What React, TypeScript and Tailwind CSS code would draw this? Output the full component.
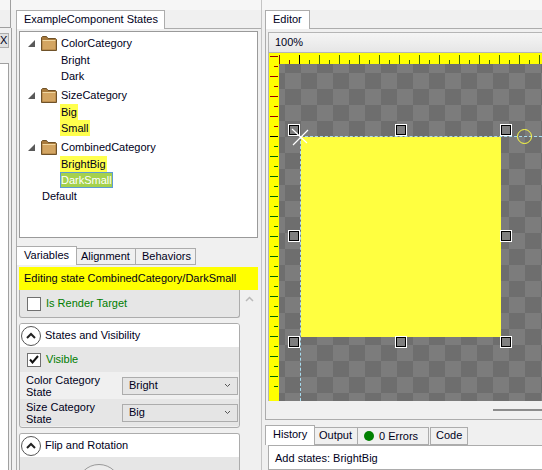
import React from "react";

const font = "font-['Liberation_Sans',Arial,sans-serif]";

function FolderIcon() {
  return (
    <svg width="16" height="15" viewBox="0 0 16 15" className="shrink-0">
      <path d="M0.5 14.5V1.5L1.5 0.5H5.5L7 2.5H14.5L15.5 3.5V14.5Z" fill="#a87a3c" stroke="#6f5229" />
      <path d="M1.5 5H14.5V13.5H1.5Z" fill="#d3a562" />
      <path d="M1.5 4.5H14.5" stroke="#f0d6a0" />
    </svg>
  );
}

function Expander() {
  return (
    <svg width="7" height="7" viewBox="0 0 7 7" className="shrink-0">
      <path d="M7 0V7H0Z" fill="#595959" />
    </svg>
  );
}

function TreeGroup({ name, children }: { name: string; children: React.ReactNode }) {
  return (
    <div className="flex flex-col mb-[3px]">
      <div className="flex items-center h-[17px]">
        <span className="w-[21px] pl-[8px] flex items-center"><Expander /></span>
        <span className="w-[20px] flex items-center"><FolderIcon /></span>
        <span>{name}</span>
      </div>
      <div className="flex flex-col pl-[40px]">{children}</div>
    </div>
  );
}

function Leaf({ text, kind }: { text: string; kind?: "hl" | "sel" }) {
  const cls =
    kind === "hl"
      ? "bg-[#ffff4d]"
      : kind === "sel"
        ? "bg-[#a4d14d] text-white outline outline-1 -outline-offset-1 outline-[#5b9bd5]"
        : "";
  return (
    <div className="h-[16px] flex">
      <span className={`h-[16px] leading-[16px] px-px whitespace-nowrap ${cls}`}>{text}</span>
    </div>
  );
}

function Handle() {
  return <div className="w-[12px] h-[12px] bg-[#7f7f7f] border border-white shadow-[inset_0_0_0_1px_#000]" />;
}

function CollapseBtn() {
  return (
    <svg width="20" height="20" viewBox="0 0 20 20" className="shrink-0">
      <circle cx="10" cy="10" r="9.5" fill="#fff" stroke="#555" />
      <path d="M6 12L10 8L14 12" fill="none" stroke="#222" strokeWidth="2" />
    </svg>
  );
}

function Select({ value }: { value: string }) {
  return (
    <div className="w-[116px] h-[18px] bg-[#e5e5e5] border border-[#acacac] flex items-center justify-between pl-[6px] pr-[6px]">
      <span>{value}</span>
      <svg width="7" height="5" viewBox="0 0 7 5"><path d="M1 1L3.5 3.5L6 1" fill="none" stroke="#555" /></svg>
    </div>
  );
}

// ticks run every 10px, long on the even ones, colour flips at the origin
function Ruler() {
  const ticks = Array.from({ length: 27 }, (_, i) => i);
  return (
    <div className="h-[11px] bg-[#ffff00] flex items-end pl-[10px] shrink-0">
      {ticks.map((i) => (
        <div key={i} className="w-[10px] shrink-0 flex items-end">
          <div
            className={`w-px ${i % 2 === 0 ? "h-[9px]" : "h-[4px]"} ${
              i === 2 ? "bg-black" : i < 2 ? "bg-[#7a1a00]" : "bg-[#3f6f00]"
            }`}
          />
        </div>
      ))}
    </div>
  );
}

function VRuler() {
  const rows = Array.from({ length: 34 }, (_, i) => i);
  return (
    <div className="w-[10px] bg-[#ffff00] shrink-0 overflow-hidden -mt-[11px] z-10 flex flex-col items-end pt-[3px]">
      {rows.map((i) => (
        <div key={i} className="h-[10px] shrink-0 w-full flex justify-end">
          <div
            className={`h-px ${i % 2 === 0 ? "w-[8px]" : "w-[4px]"} mr-px ${
              i === 8 ? "bg-black" : i < 8 ? "bg-[#9b0000]" : "bg-[#006a00]"
            }`}
          />
        </div>
      ))}
    </div>
  );
}

export default function App() {
  return (
    <div className={`${font} w-[542px] h-[470px] overflow-hidden bg-[linear-gradient(#f6f6f6_10px,#f0f0f0_10px)] text-[11px] leading-[15px] text-[#00001a] flex`}>
      {/* left sliver */}
      <div className="w-[16px] shrink-0 flex flex-col relative">
        <div className="h-[28px] w-[11px] border-b border-r border-[#a0a0a0] shrink-0" />
        <div className="w-[9px] h-[15px] mt-[5px] bg-[#e1e1e1] border border-[#adadad] border-l-0 leading-[13px] overflow-hidden shrink-0">X</div>
        <div className="w-[9px] flex-1 mt-[15px] bg-white border-r border-t border-[#a0a0a0]" />
        <div className="absolute left-[11px] top-[28px] bottom-0 w-px bg-[#a0a0a0]" />
      </div>

      {/* left column */}
      <div className="w-[246px] shrink-0 flex flex-col pt-[10px] border-r border-[#c4c4c4]">
        <div className="h-[19px] w-[149px] bg-white border border-b-0 border-[#acacac] pl-[7px] leading-[17px] shrink-0 whitespace-nowrap -mb-px z-10">ExampleComponent States</div>
        <div className="flex-1 min-h-0 flex flex-col border-l border-t border-[#acacac] pl-[2px] pt-[2px]">
          <div className="h-[207px] bg-white border border-[#9a9a9a] w-[239px] pt-[3px] flex flex-col shrink-0">
            <TreeGroup name="ColorCategory">
              <Leaf text="Bright" />
              <Leaf text="Dark" />
            </TreeGroup>
            <TreeGroup name="SizeCategory">
              <Leaf text="Big" kind="hl" />
              <Leaf text="Small" kind="hl" />
            </TreeGroup>
            <TreeGroup name="CombinedCategory">
              <Leaf text="BrightBig" kind="hl" />
              <Leaf text="DarkSmall" kind="sel" />
            </TreeGroup>
            <div className="pl-[21px] -mt-[3px]"><Leaf text="Default" /></div>
          </div>

          {/* property grid */}
          <div className="flex items-end h-[19px] mt-[8px] -ml-[3px] shrink-0 whitespace-nowrap">
            <div className="h-[19px] w-[61px] bg-white border border-b-0 border-[#acacac] pl-[7px] leading-[17px]">Variables</div>
            <div className="h-[17px] w-[59px] bg-[#f0f0f0] border border-l-0 border-[#acacac] pl-[4px]">Alignment</div>
            <div className="h-[17px] w-[60px] bg-[#f0f0f0] border border-l-0 border-[#acacac] pl-[6px]">Behaviors</div>
          </div>
          <div className="w-[239px] mt-[2px] flex-1 flex flex-col min-h-0">
            <div className="h-[23px] bg-[#ffff00] pl-[5px] leading-[23px] shrink-0 whitespace-nowrap">Editing state CombinedCategory/DarkSmall</div>
            <div className="flex flex-1 min-h-0">
              <div className="w-[221px] flex flex-col gap-[5px]">
                <div className="h-[28px] bg-[#e6e6e6] border border-t-0 border-[#acacac] rounded-b-[3px] flex items-center pl-[7px] gap-[5px] text-[#007d00] shrink-0">
                  <div className="w-[14px] h-[14px] bg-white border border-[#707070]" />
                  Is Render Target
                </div>
                <div className="h-[105px] border border-[#acacac] rounded-[3px] flex flex-col overflow-hidden shrink-0 bg-[#f0f0f0]">
                  <div className="h-[23px] bg-white flex items-center pl-px gap-[4px] shrink-0">
                    <CollapseBtn />
                    States and Visibility
                  </div>
                  <div className="h-[25px] bg-[#e6e6e6] flex items-center pl-[7px] gap-[5px] text-[#007d00] shrink-0">
                    <div className="w-[14px] h-[14px] bg-white border border-[#707070] flex items-center justify-center">
                      <svg width="10" height="9" viewBox="0 0 10 9"><path d="M1 4.5L3.5 7.5L9 1" fill="none" stroke="#111" strokeWidth="2" /></svg>
                    </div>
                    Visible
                  </div>
                  <div className="h-[27px] flex items-center justify-between pl-[6px] pr-[1px] shrink-0">
                    <span className="leading-[12px] w-[88px]">Color Category State</span>
                    <Select value="Bright" />
                  </div>
                  <div className="h-[27px] bg-[#e6e6e6] flex items-center justify-between pl-[6px] pr-[1px] shrink-0">
                    <span className="leading-[12px] w-[88px]">Size Category State</span>
                    <Select value="Big" />
                  </div>
                </div>
                <div className="flex-1 border border-b-0 border-[#acacac] rounded-t-[3px] flex flex-col overflow-hidden">
                  <div className="h-[23px] bg-white flex items-center pl-px gap-[4px] shrink-0">
                    <CollapseBtn />
                    Flip and Rotation
                  </div>
                  <div className="flex-1 bg-[#e6e6e6] flex justify-start">
                    <div className="w-[44px] h-[44px] shrink-0 mt-[7px] ml-[57px] rounded-full border border-[#999] bg-[#ececec]" />
                  </div>
                </div>
              </div>
              <div className="w-[18px] flex justify-center pt-[6px]">
                <svg width="9" height="6" viewBox="0 0 9 6"><path d="M1 5L4.5 1.5L8 5" fill="none" stroke="#b9b9b9" strokeWidth="1.5" /></svg>
              </div>
            </div>
          </div>
        </div>
      </div>

      {/* right column */}
      <div className="flex-1 min-w-0 flex flex-col pt-[10px] ml-[3px] whitespace-nowrap">
        <div className="h-[19px] w-[45px] bg-white border border-b-0 border-[#acacac] pl-[7px] leading-[17px] shrink-0 -mb-px z-10">Editor</div>
        <div className="h-[392px] border border-r-0 border-[#acacac] pl-[2px] pt-[3px] pb-px shrink-0 flex flex-col">
          <div className="h-[21px] bg-gradient-to-b from-[#f5f5f5] to-[#e6e6e6] border border-r-0 border-[#b5b5b5] pl-[6px] leading-[19px] shrink-0">100%</div>
          <div className="flex-1 min-h-0 flex flex-col overflow-hidden border-l border-[#b5b5b5]">
            <Ruler />
            <div className="flex-1 min-h-0 flex">
              <VRuler />
              <div className="relative flex-1 overflow-hidden bg-[repeating-conic-gradient(#6e6e6e_0_25%,#7c7c7c_0_50%)] bg-[length:32px_32px] bg-[position:6px_9px]">
                <div className="absolute left-[22px] top-[73px] w-[200px] h-[200px] bg-[#ffff40]" />
                <div className="absolute left-[21px] top-[72px] bottom-0 border-l border-dashed border-[#a8dcf0]" />
                <div className="absolute left-[21px] right-0 top-[72px] border-t border-dashed border-[#a8dcf0]" />
                <div className="absolute left-[9px] top-[60px]"><Handle /></div>
                <div className="absolute left-[116px] top-[60px]"><Handle /></div>
                <div className="absolute left-[221px] top-[60px]"><Handle /></div>
                <div className="absolute left-[9px] top-[166px]"><Handle /></div>
                <div className="absolute left-[221px] top-[166px]"><Handle /></div>
                <div className="absolute left-[9px] top-[272px]"><Handle /></div>
                <div className="absolute left-[116px] top-[272px]"><Handle /></div>
                <div className="absolute left-[221px] top-[272px]"><Handle /></div>
                <svg width="18" height="18" viewBox="0 0 18 18" className="absolute left-[12px] top-[64px]">
                  <path d="M2 17L17 2M1 1L16 15" stroke="#fff" strokeWidth="1.2" />
                </svg>
                <div className="absolute left-[238px] top-[65px] w-[15px] h-[15px] rounded-full border border-[#ffff40]" />
              </div>
            </div>
          </div>
          <div className="h-[17px] flex items-start justify-end shrink-0 pt-[8px]">
            <div className="w-[49px] h-[2px] bg-[#8c8c8c]" />
          </div>
        </div>
        <div className="flex items-end h-[20px] mt-[5px] shrink-0">
          <div className="h-[20px] w-[50px] bg-white border border-b-0 border-[#acacac] pl-[7px] leading-[17px]">History</div>
          <div className="h-[18px] w-[43px] border border-l-0 border-[#acacac] pl-[4px]">Output</div>
          <div className="h-[18px] w-[71px] border border-l-0 border-[#acacac] flex items-center pl-[6px] gap-[5px]">
            <span className="w-[10px] h-[10px] rounded-full bg-[#008000]" />
            0 Errors
          </div>
          <div className="h-[18px] w-[38px] ml-px border border-[#acacac] pl-[5px]">Code</div>
        </div>
        <div className="flex-1 ml-[3px] bg-white border border-r-0 border-[#acacac] pl-[6px] pt-[5px]">Add states: BrightBig</div>
      </div>
    </div>
  );
}
